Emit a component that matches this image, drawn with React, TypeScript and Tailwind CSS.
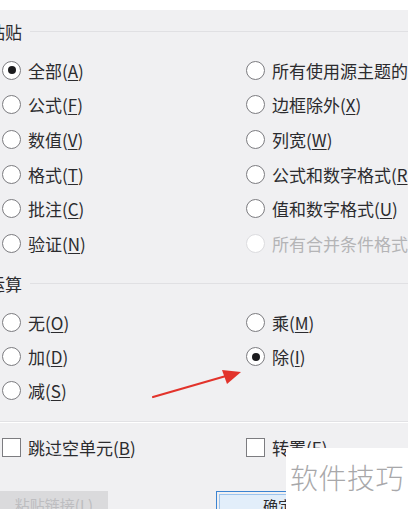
import React from 'react';

type Opt = { label: string; key: string; checked?: boolean; disabled?: boolean };

const pasteLeft: Opt[] = [
    { label: '全部', key: 'A', checked: true },
    { label: '公式', key: 'F' },
    { label: '数值', key: 'V' },
    { label: '格式', key: 'T' },
    { label: '批注', key: 'C' },
    { label: '验证', key: 'N' },
];

const pasteRight: Opt[] = [
    { label: '所有使用源主题的单元', key: 'H' },
    { label: '边框除外', key: 'X' },
    { label: '列宽', key: 'W' },
    { label: '公式和数字格式', key: 'R' },
    { label: '值和数字格式', key: 'U' },
    { label: '所有合并条件格式', key: 'G', disabled: true },
];

const opLeft: Opt[] = [
    { label: '无', key: 'O' },
    { label: '加', key: 'D' },
    { label: '减', key: 'S' },
];

const opRight: Opt[] = [
    { label: '乘', key: 'M' },
    { label: '除', key: 'I', checked: true },
];

function Label({ o }: { o: Opt }) {
    return (
        <span className={`whitespace-nowrap ${o.disabled ? 'text-[#b4b4b6]' : 'text-[#2b2b2e]'}`}>
            {o.label}(<span className={o.disabled ? '' : 'underline underline-offset-2'}>{o.key}</span>)
        </span>
    );
}

function Radio({ o }: { o: Opt }) {
    return (
        <div className="flex items-center gap-[7px] h-full">
            <span
                className={`shrink-0 w-[19px] h-[19px] rounded-full border-[1.5px] bg-white flex items-center justify-center ${
                    o.disabled ? 'border-[#dcdcdf]' : 'border-[#7c7c80]'
                }`}
            >
                {o.checked && <span className="w-[8px] h-[8px] rounded-full bg-[#1c1c1e]" />}
            </span>
            <Label o={o} />
        </div>
    );
}

function Check({ label, k }: { label: string; k: string }) {
    return (
        <div className="flex items-center gap-[7px] h-full">
            <span className="shrink-0 w-[19px] h-[19px] border-[1.5px] border-[#7c7c80] bg-white" />
            <span className="whitespace-nowrap text-[#2b2b2e]">
                {label}(<span className="underline underline-offset-2">{k}</span>)
            </span>
        </div>
    );
}

function GroupHeader({ title, h }: { title: string; h: string }) {
    return (
        <div className={`flex items-center ${h}`}>
            <span className="-ml-[12px] text-[#2b2b2e] whitespace-nowrap">{title}</span>
            <div className="flex-1 ml-[8px] h-px bg-[#e0e0e3]" />
        </div>
    );
}

export default function App() {
    return (
        <div
            className="relative w-[408px] h-[509px] overflow-hidden bg-[#f0f0f2] text-[17px] leading-none"
            style={{ fontFamily: '"Noto Sans CJK SC", "Noto Sans", sans-serif' }}
        >
            <div className="h-[10px] bg-white" />

            <GroupHeader title="粘贴" h="h-[43px]" />
            <div className="grid grid-cols-[244px_1fr] auto-rows-[34.6px] pl-[2px]">
                {pasteLeft.map((o, i) => (
                    <React.Fragment key={o.key}>
                        <Radio o={o} />
                        <Radio o={pasteRight[i]} />
                    </React.Fragment>
                ))}
            </div>

            <GroupHeader title="运算" h="h-[45px]" />
            <div className="grid grid-cols-[244px_1fr] auto-rows-[34px] pl-[2px]">
                {opLeft.map((o, i) => (
                    <React.Fragment key={o.key}>
                        <Radio o={o} />
                        {opRight[i] ? <Radio o={opRight[i]} /> : <div />}
                    </React.Fragment>
                ))}
            </div>

            <div className="h-[13px]" />
            <div className="h-px bg-[#e2e2e5]" />
            <div className="h-px bg-white" />

            <div className="grid grid-cols-[244px_1fr] h-[34px] mt-[8px] pl-[2px]">
                <Check label="跳过空单元" k="B" />
                <Check label="转置" k="E" />
            </div>

            <div className="flex mt-[26px] text-[15px]">
                <div className="w-[108px] h-[24px] bg-[#dadadc] flex items-center justify-center text-[#bdbdc0] pt-[4px]">
                    粘贴链接(L)
                </div>
                <div className="ml-[108px] w-[124px] h-[24px] border border-[#3c84d2] p-[2px]">
                    <div className="h-full border border-[#9cc4ee] bg-[#e2eefa] flex items-center justify-center text-[#2b2b2e] pt-[6px]">
                        确定
                    </div>
                </div>
            </div>

            <svg className="absolute left-0 top-0 pointer-events-none" width="408" height="509">
                <line x1="153" y1="397" x2="226" y2="376" stroke="#e2332b" strokeWidth="2.2" strokeLinecap="round" />
                <polygon points="241,372 222,370 227,384" fill="#e2332b" />
            </svg>

            <div className="absolute left-[286px] top-[448px] w-[122px] h-[61px] bg-white flex items-start pl-[4px] pt-[15px]">
                <span className="text-[28px] leading-none text-[#a8a8aa] font-light tracking-[0.5px] whitespace-nowrap">
                    软件技巧
                </span>
            </div>
        </div>
    );
}
